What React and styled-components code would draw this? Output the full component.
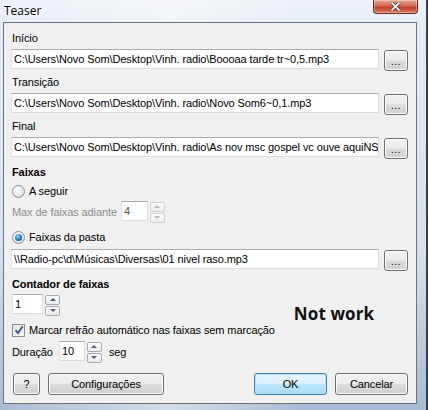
import React from 'react';
import styled, { createGlobalStyle } from 'styled-components';

const Global = createGlobalStyle`
  html, body { margin: 0; padding: 0; }
  body {
    width: 428px;
    height: 410px;
    overflow: hidden;
    font-family: "Liberation Sans", Arial, sans-serif;
    font-size: 11px;
    letter-spacing: -0.1px;
    color: #000;
  }
`;

const Frame = styled.div`
  width: 428px;
  height: 410px;
  box-sizing: border-box;
  padding: 0 9px 6px 3px;
  display: flex;
  flex-direction: column;
  background:
    linear-gradient(90deg, rgba(255,255,255,0) 0%, rgba(255,255,255,0.5) 40%, rgba(255,255,255,0) 70%),
    linear-gradient(180deg, #eef3f9 0%, #e3ebf4 8%, #d6e2ef 60%, #a9bcd3 100%);
  border-right: 2px solid #3a3f47;
`;

const TitleBar = styled.div`
  height: 22px;
  display: flex;
  align-items: flex-start;
  justify-content: space-between;
`;

const Title = styled.span`
  font-family: "Open Sans", "Noto Sans", sans-serif;
  font-size: 12px;
  line-height: 14px;
  letter-spacing: 0;
  margin: 4px 0 0 1px;
  color: #000;
  text-shadow: 0 0 6px #fff, 0 0 3px #fff;
`;

const CloseButton = styled.div`
  width: 45px;
  height: 14px;
  margin-right: -1px;
  box-sizing: border-box;
  border: 1px solid #6b2a20;
  border-top: none;
  border-radius: 0 0 4px 4px;
  background: linear-gradient(180deg, #e8a493 0%, #d46a50 45%, #c3422a 55%, #d7775e 100%);
  display: flex;
  align-items: center;
  justify-content: center;
  box-shadow: inset 0 0 0 1px rgba(255,255,255,0.35);
`;

const Client = styled.div`
  flex: 1;
  background: #f0f0f0;
  border: 1px solid #6d7480;
  padding: 8px 8px 0 8px;
  display: flex;
  flex-direction: column;
`;

const Field = styled.div`
  display: flex;
  flex-direction: column;
  gap: 4px;
  margin-bottom: 4px;
`;

const Label = styled.div`
  height: 14px;
  line-height: 14px;
  margin-top: ${p => p.$top || '0'};
  font-weight: ${p => (p.$bold ? 'bold' : 'normal')};
  color: ${p => (p.$disabled ? '#8d8d8d' : '#000')};
`;

const PathRow = styled.div`
  display: flex;
  align-items: flex-start;
  gap: 5px;
  margin-left: -1px;
  margin-top: ${p => p.$top || '0'};
`;

const TextBox = styled.div`
  box-sizing: border-box;
  height: 20px;
  width: ${p => p.$width || 'auto'};
  flex: ${p => (p.$width ? 'none' : '1')};
  background: #fff;
  border: 1px solid #d9dde3;
  border-top-color: #abadb3;
  border-left-color: #e2e3ea;
  padding: 0 2px;
  line-height: 18px;
  white-space: nowrap;
  overflow: hidden;
  color: ${p => (p.$disabled ? '#555' : '#000')};
`;

const BrowseButton = styled.div`
  box-sizing: border-box;
  width: 24px;
  height: 21px;
  margin-top: 1px;
  border: 1px solid #707070;
  border-radius: 3px;
  background: linear-gradient(180deg, #f2f2f2 0%, #ebebeb 48%, #dddddd 52%, #cfcfcf 100%);
  box-shadow: inset 0 0 0 1px #fcfcfc;
  display: flex;
  align-items: flex-end;
  justify-content: center;
  padding-bottom: 5px;
  font-size: 10px;
  line-height: 6px;
  letter-spacing: 0.5px;
`;

const OptionRow = styled.label`
  display: flex;
  align-items: center;
  gap: 4px;
  height: 16px;
  margin-top: ${p => p.$top || '0'};
`;

const Radio = styled.span`
  box-sizing: border-box;
  width: 13px;
  height: 13px;
  border-radius: 50%;
  border: 1px solid #8e8f8f;
  background: radial-gradient(circle at 40% 35%, #ffffff 0%, #e9e9e9 55%, #cfcfcf 100%);
  display: flex;
  align-items: center;
  justify-content: center;
  &::after {
    content: '';
    display: ${p => (p.$checked ? 'block' : 'none')};
    width: 7px;
    height: 7px;
    border-radius: 50%;
    background: radial-gradient(circle at 40% 35%, #8fd8fa 0%, #1a7fc6 50%, #0b3f73 100%);
  }
`;

const Checkbox = styled.span`
  box-sizing: border-box;
  width: 13px;
  height: 13px;
  border: 1px solid #8e8f8f;
  background: linear-gradient(135deg, #e4e4e4 0%, #f6f6f6 100%);
  display: flex;
  align-items: center;
  justify-content: center;
`;

const SpinRow = styled.div`
  display: flex;
  align-items: center;
  gap: ${p => p.$gap || '4px'};
  height: 21px;
  margin: ${p => p.$margin || '0'};
`;

const SpinWrap = styled.div`
  display: flex;
  align-items: flex-start;
  gap: 2px;
`;

const Arrows = styled.div`
  display: flex;
  flex-direction: column;
  gap: 1px;
  padding-top: 1px;
`;

const ArrowBtn = styled.div`
  box-sizing: border-box;
  width: 15px;
  height: 10px;
  border: 1px solid ${p => (p.$disabled ? '#cfd2d6' : '#a4acb8')};
  border-radius: 2px;
  background: linear-gradient(180deg, #fbfbfb 0%, #ececec 100%);
  display: flex;
  align-items: center;
  justify-content: center;
  &::after {
    content: '';
    width: 0;
    height: 0;
    border-left: 3px solid transparent;
    border-right: 3px solid transparent;
    ${p => (p.$down ? 'border-top' : 'border-bottom')}: 3px solid ${p => (p.$disabled ? '#b9bec6' : '#4c607f')};
  }
`;

const Spin = ({ value, width, disabled }) => (
  <SpinWrap>
    <TextBox $width={width} $disabled={disabled}>{value}</TextBox>
    <Arrows>
      <ArrowBtn $disabled={disabled} />
      <ArrowBtn $disabled={disabled} $down />
    </Arrows>
  </SpinWrap>
);

const CounterBlock = styled.div`
  display: flex;
  align-items: center;
`;

const CounterLeft = styled.div`
  display: flex;
  flex-direction: column;
`;

const Note = styled.div`
  font-family: "Open Sans", "Noto Sans", sans-serif;
  font-weight: bold;
  font-size: 17px;
  letter-spacing: 0.1px;
  margin: -7px 0 0 19px;
  color: #111;
`;

const ButtonBar = styled.div`
  display: flex;
  align-items: center;
  gap: 8px;
  margin: 11px 0 0 1px;
`;

const Spacer = styled.div`
  flex: 1;
`;

const Button = styled.div`
  box-sizing: border-box;
  width: ${p => p.$width};
  height: 22px;
  border: 1px solid ${p => (p.$default ? '#3c7fb1' : '#707070')};
  border-radius: 3px;
  background: ${p =>
    p.$default
      ? 'linear-gradient(180deg, #eaf6fd 0%, #d9f0fc 48%, #bee6fd 52%, #a7d9f5 100%)'
      : 'linear-gradient(180deg, #f2f2f2 0%, #ebebeb 48%, #dddddd 52%, #cfcfcf 100%)'};
  box-shadow: inset 0 0 0 1px ${p => (p.$default ? '#b7e2f9' : '#fcfcfc')};
  display: flex;
  align-items: center;
  justify-content: center;
  line-height: 20px;
`;

const Browse = () => <BrowseButton>...</BrowseButton>;

export default function App() {
  return (
    <>
      <Global />
      <Frame>
        <TitleBar>
          <Title>Teaser</Title>
          <CloseButton>
            <svg width="11" height="9" viewBox="0 0 11 9">
              <path d="M1.5 0.5 L9.5 8.5 M9.5 0.5 L1.5 8.5" stroke="#3a3a3a" strokeWidth="3.2" />
              <path d="M1.5 0.5 L9.5 8.5 M9.5 0.5 L1.5 8.5" stroke="#f4f4f4" strokeWidth="1.8" />
            </svg>
          </CloseButton>
        </TitleBar>
        <Client>
          <Field>
            <Label>Início</Label>
            <PathRow>
              <TextBox>C:\Users\Novo Som\Desktop\Vinh. radio\Boooaa tarde tr~0,5.mp3</TextBox>
              <Browse />
            </PathRow>
          </Field>
          <Field>
            <Label>Transição</Label>
            <PathRow>
              <TextBox>C:\Users\Novo Som\Desktop\Vinh. radio\Novo Som6~0,1.mp3</TextBox>
              <Browse />
            </PathRow>
          </Field>
          <Field>
            <Label>Final</Label>
            <PathRow>
              <TextBox>C:\Users\Novo Som\Desktop\Vinh. radio\As nov msc gospel vc ouve aquiNS</TextBox>
              <Browse />
            </PathRow>
          </Field>

          <Label $bold $top="2px">Faixas</Label>
          <OptionRow $top="4px">
            <Radio />
            A seguir
          </OptionRow>
          <SpinRow $margin="2px 0 0 0">
            <Label $disabled>Max de faixas adiante</Label>
            <Spin value="4" width="27px" disabled />
          </SpinRow>
          <OptionRow $top="7px">
            <Radio $checked />
            Faixas da pasta
          </OptionRow>
          <PathRow $top="4px">
            <TextBox>\\Radio-pc\d\Músicas\Diversas\01 nivel raso.mp3</TextBox>
            <Browse />
          </PathRow>

          <CounterBlock>
            <CounterLeft>
              <Label $bold $top="6px">Contador de faixas</Label>
              <SpinRow $margin="3px 0 0 0">
                <Spin value="1" width="31px" />
              </SpinRow>
              <OptionRow $top="7px">
                <Checkbox>
                  <svg width="10" height="10" viewBox="0 0 10 10">
                    <path d="M1.5 5.2 L4 8 L8.7 1.2" fill="none" stroke="#3f5a8c" strokeWidth="1.9" />
                  </svg>
                </Checkbox>
                Marcar refrão automático nas faixas sem marcação
              </OptionRow>
              <SpinRow $gap="6px" $margin="3px 0 0 0">
                <span>Duração</span>
                <Spin value="10" width="26px" />
                <span style={{ marginLeft: 1 }}>seg</span>
              </SpinRow>
            </CounterLeft>
            <Note>Not work</Note>
          </CounterBlock>

          <ButtonBar>
            <Button $width="27px">?</Button>
            <Button $width="116px">Configurações</Button>
            <Spacer />
            <Button $width="73px" $default>OK</Button>
            <Button $width="73px">Cancelar</Button>
          </ButtonBar>
        </Client>
      </Frame>
    </>
  );
}
